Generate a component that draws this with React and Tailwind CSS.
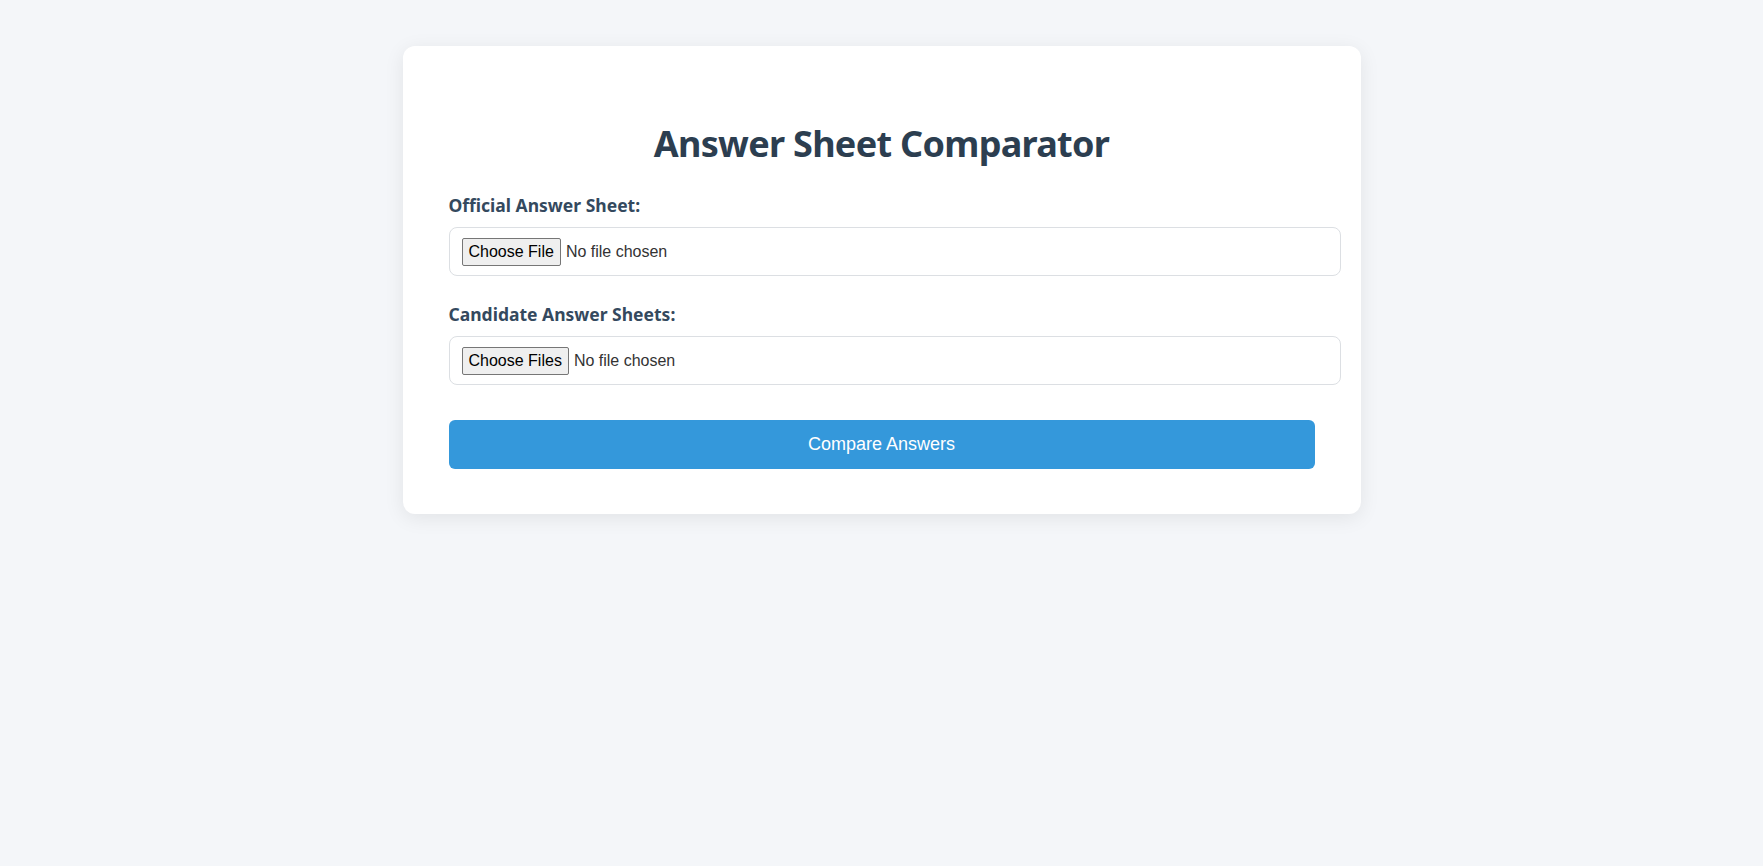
import React from 'react';

const FileField = ({ label, multiple }) => (
  <div className="mb-[25px]">
    <label className="block mb-2 text-[17.5px] leading-[27px] font-bold text-[#34495e] font-['Noto_Sans',sans-serif]">
      {label}
    </label>
    <input
      type="file"
      multiple={multiple}
      className="block box-content w-full h-[25px] pt-[10px] pb-[12px] px-[12px] border border-[#dcdfe3] rounded-lg bg-white text-[16px] text-[#333] font-['Liberation_Sans',Arial,sans-serif] file:mr-[5px] file:px-[6px] file:py-[1px] file:border file:border-solid file:border-[#767676] file:rounded-[2px] file:bg-[#efefef] file:text-black file:text-[16px] file:font-['Liberation_Sans',Arial,sans-serif]"
    />
  </div>
);

export default function App() {
  return (
    <div className="min-h-screen bg-[#f4f6f9] pt-[46px]">
      <div className="mx-auto w-[958px] bg-white rounded-xl shadow-[0_4px_20px_rgba(0,0,0,0.08)] pt-[46px] pb-[45px] pl-[46px] pr-[46px]">
        <h1 className="mt-[30px] mb-[26px] text-center text-[36px] leading-[44px] tracking-[-0.7px] font-bold text-[#2c3e50] font-['Noto_Sans',sans-serif]">
          Answer Sheet Comparator
        </h1>

        <FileField label="Official Answer Sheet:" />
        <FileField label="Candidate Answer Sheets:" multiple />

        <button className="mt-[10px] w-full h-[49px] rounded-md bg-[#3498db] text-white text-[18px] font-['Liberation_Sans',Arial,sans-serif]">
          Compare Answers
        </button>
      </div>
    </div>
  );
}
